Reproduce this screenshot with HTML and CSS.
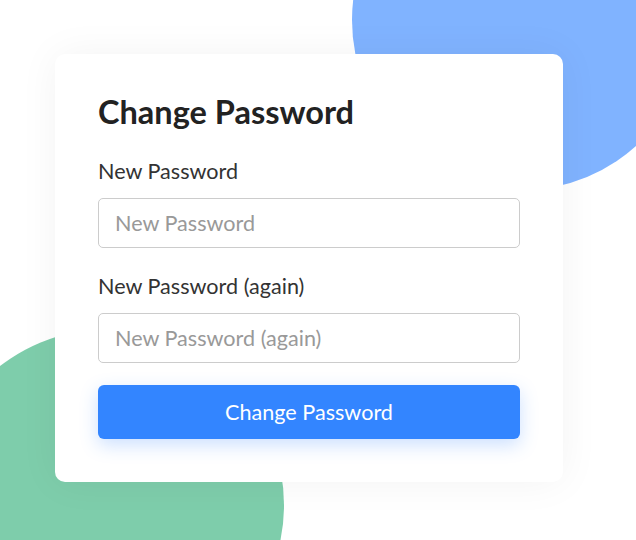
FILE: index.html
```html
<!DOCTYPE html>
<html lang="en">

<head>
    <meta charset="UTF-8">
    <title>Change Password</title>
    <link rel="stylesheet" href="styles.css">
</head>

<body>
    <div class="scene">
        <!-- decorative blobs behind the card -->
        <div class="blob blob-blue"></div>
        <div class="blob blob-green"></div>

        <div class="card">
            <h1>Change Password</h1>
            <form class="password-form">
                <label for="pass1">New Password</label>
                <input type="password" id="pass1" placeholder="New Password">
                <label for="pass2">New Password (again)</label>
                <input type="password" id="pass2" placeholder="New Password (again)">
                <button type="submit">Change Password</button>
            </form>
        </div>
    </div>
</body>

</html>
```

FILE: styles.css
```css
body {
    margin: 0;
    padding: 0;
    font-family: 'Lato', sans-serif;
    background-color: #fff;
    color: #222;
}

.scene {
    position: relative;
    width: 636px;
    height: 540px;
    overflow: hidden;
    padding-top: 54px;
    box-sizing: border-box;
}

/* Фоновые круги */
.blob {
    position: absolute;
    border-radius: 50%;
    z-index: 0;
}

.blob-blue {
    width: 340px;
    height: 340px;
    left: 352px;
    top: -150px;
    background-color: #80b3ff;
}

.blob-green {
    width: 352px;
    height: 352px;
    left: -68px;
    top: 329px;
    background-color: #7ecdab;
}

.card {
    position: relative;
    z-index: 1;
    box-sizing: border-box;
    width: 508px;
    margin-left: 55px;
    padding: 38px 43px 43px;
    background: #fff;
    border-radius: 10px;
    box-shadow: 0 0 40px rgba(0, 0, 0, 0.05);
}

h1 {
    margin: 0 0 27px;
    font-size: 32.5px;
    font-weight: 700;
    color: #222;
}

.password-form {
    display: flex;
    flex-direction: column;
}

.password-form label {
    font-size: 21.6px;
    color: #333;
    margin-bottom: 14px;
}

.password-form input {
    box-sizing: border-box;
    height: 50px;
    padding: 0 16px;
    margin-bottom: 25px;
    font-family: 'Lato', sans-serif;
    font-size: 21.6px;
    border: 1px solid #ccc;
    border-radius: 5px;
    color: #333;
}

.password-form input::placeholder {
    color: #999;
}

.password-form input:last-of-type {
    margin-bottom: 22px;
}

.password-form button {
    height: 54px;
    border: none;
    border-radius: 6px;
    background-color: #3385ff;
    color: #fff;
    font-family: 'Lato', sans-serif;
    font-size: 21.6px;
    cursor: pointer;
    box-shadow: 0 6px 18px rgba(51, 133, 255, 0.25);
}
```
